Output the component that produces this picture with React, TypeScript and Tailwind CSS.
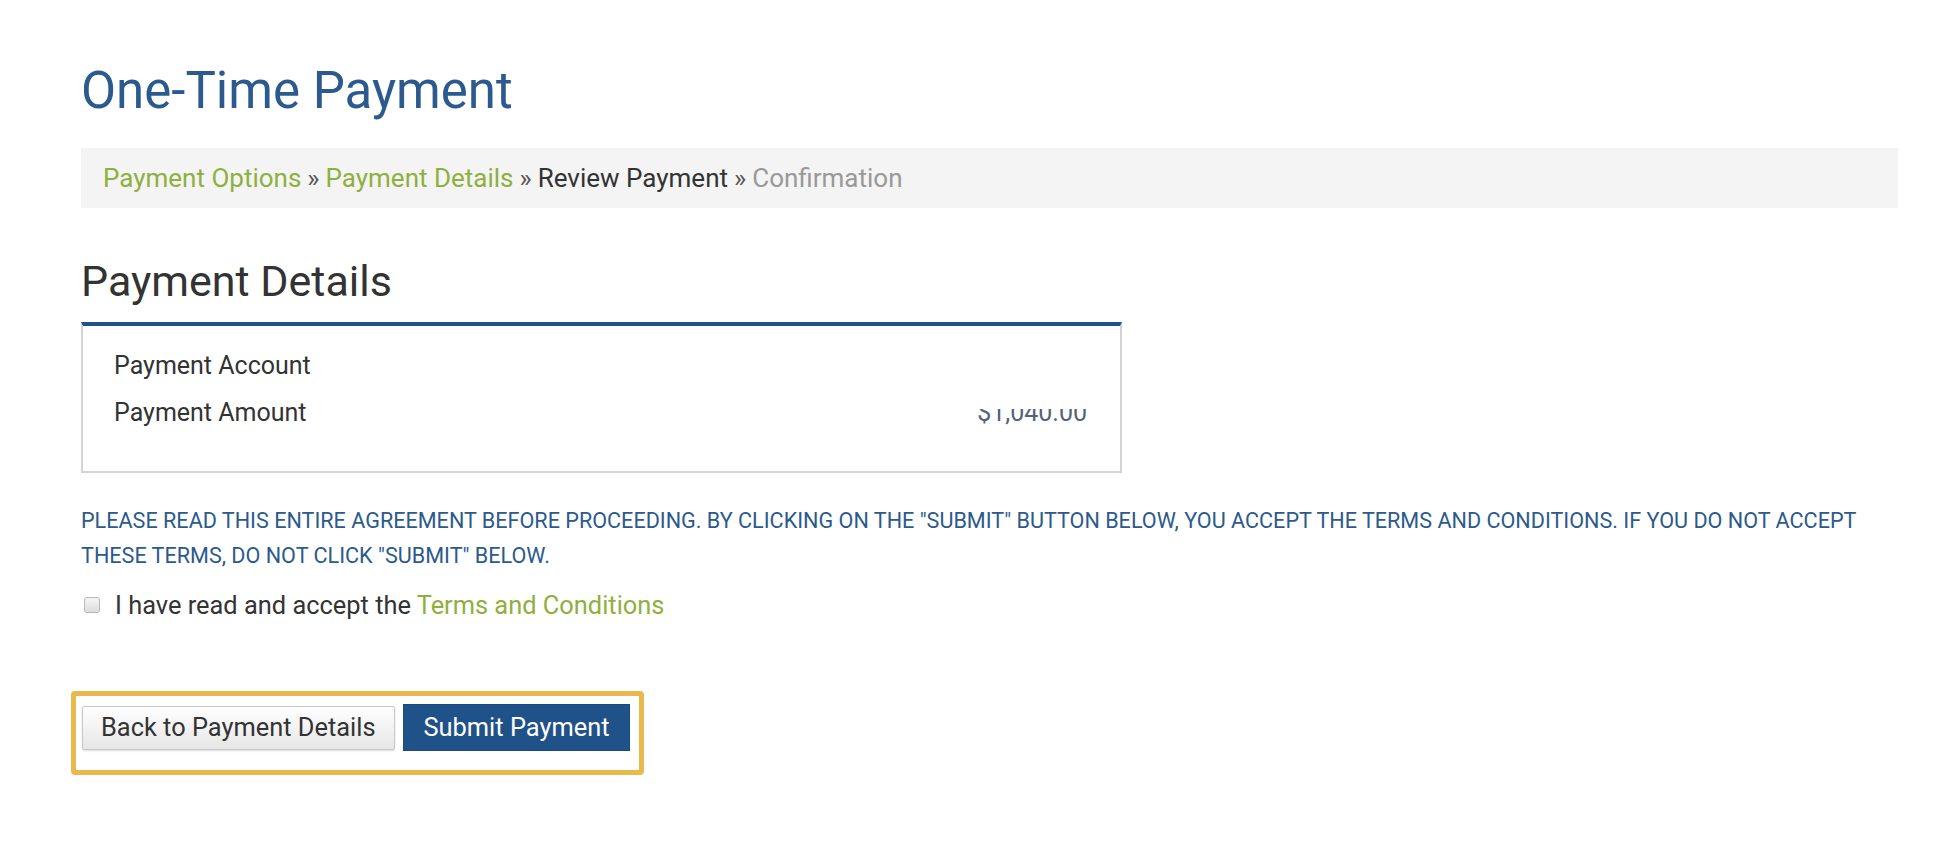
const crumbs = [
  { label: 'Payment Options', tone: 'link' },
  { label: 'Payment Details', tone: 'link' },
  { label: 'Review Payment', tone: 'current' },
  { label: 'Confirmation', tone: 'next' },
] as const

function Breadcrumb() {
  return (
    <div className="mt-[27px] flex h-[60px] items-center bg-[#f4f4f4] pl-[22px] text-[26px]">
      {crumbs.map((c, i) => (
        <span key={c.label} className="flex items-center">
          {i > 0 ? <span className="px-[6px] text-[#555]">»</span> : null}
          <span
            className={
              c.tone === 'link'
                ? 'text-[#8fb03e]'
                : c.tone === 'current'
                  ? 'text-[#333]'
                  : 'text-[#999]'
            }
          >
            {c.label}
          </span>
        </span>
      ))}
    </div>
  )
}

export default function App() {
  return (
    <div className="min-h-screen bg-white pl-[81px] pr-[62px] pt-[61px] font-['Roboto',sans-serif] text-[#333]">
      <h1 className="text-[51px] leading-[60px] text-[#2c5a8e]">One-Time Payment</h1>

      <Breadcrumb />

      <h2 className="mt-[48px] text-[43px] leading-[50px] text-[#333]">Payment Details</h2>

      <div className="mt-[16px] w-[1041px] border-2 border-t-4 border-[#d4d4d4] border-t-[#215288] pt-[16px] pb-[35px] pl-[31px] pr-[33px] text-[25px] leading-[47px]">
        <div className="flex justify-between">
          <span>Payment Account</span>
        </div>
        <div className="flex justify-between">
          <span>Payment Amount</span>
          {/* amount is cut off at the top in the original */}
          <span className="mt-[20px] block h-[24px] overflow-hidden">
            <span className="-mt-[20px] block text-[#56607a]">$1,040.00</span>
          </span>
        </div>
      </div>

      <p className="mt-[30px] text-[21.6px] leading-[35px] uppercase text-[#2b5a8c]">
        Please read this entire agreement before proceeding. By clicking on the "Submit" button below, you
        accept the terms and conditions. If you do not accept these terms, do not click "Submit" below.
      </p>

      <label className="mt-[12px] flex h-[40px] items-center text-[25.4px]">
        <span className="ml-[3px] mr-[15px] h-[16px] w-[16px] rounded-[3px] border border-[#b8b8b8] bg-gradient-to-b from-[#f6f6f6] to-[#dcdcdc]" />
        <span>
          I have read and accept the <span className="text-[#8fb03e]">Terms and Conditions</span>
        </span>
      </label>

      <div className="mt-[66px] -ml-[10px] inline-flex items-center gap-[8px] rounded-[4px] border-[5px] border-[#e9b94c] pt-[8px] pb-[19px] pl-[6px] pr-[9px]">
        <button className="h-[44px] rounded-[2px] border border-[#c8c8c8] bg-gradient-to-b from-white to-[#e6e6e6] px-[18px] text-[25.4px] text-[#333] shadow-[0_1px_2px_rgba(0,0,0,0.15)]">
          Back to Payment Details
        </button>
        <button className="h-[47px] border border-[#1b4a80] bg-[#1f5289] px-[20px] text-[25.4px] text-white">
          Submit Payment
        </button>
      </div>
    </div>
  )
}
